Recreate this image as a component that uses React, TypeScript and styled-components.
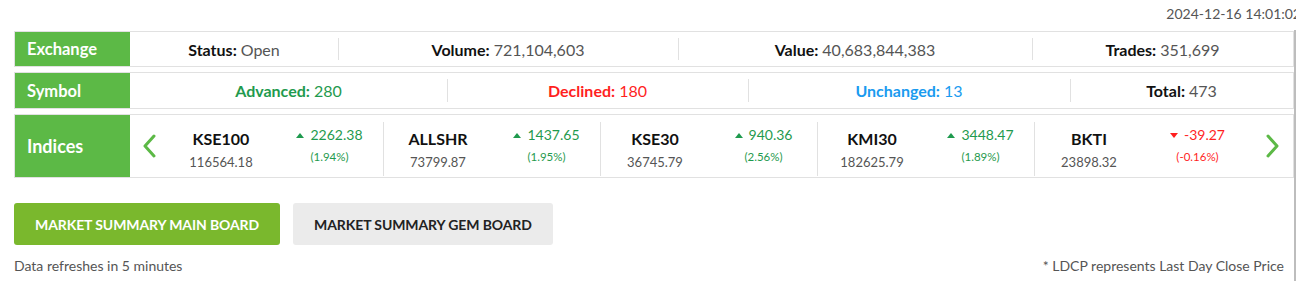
import styled, { createGlobalStyle } from "styled-components";

const labelGreen = "#5cb946";
const upGreen = "#1f9a4e";
const downRed = "#ff1f1f";
const lineGray = "#e1e1e1";

const GlobalStyle = createGlobalStyle`
  *, *::before, *::after {
    box-sizing: border-box;
  }
  html, body {
    margin: 0;
    padding: 0;
    background: #ffffff;
    overflow: hidden;
  }
  body {
    font-family: Lato, "Open Sans", "Liberation Sans", sans-serif;
    color: #222;
  }
`;

const Page = styled.div`
  width: 1310px;
  height: 281px;
  display: flex;
  flex-direction: column;
`;

const Header = styled.div`
  height: 30px;
  display: flex;
  justify-content: flex-end;
  align-items: flex-start;
  padding: 5px 9px 0 0;
  font-size: 14px;
  line-height: 17px;
  color: #555;
  white-space: nowrap;
`;

const Body = styled.div`
  flex: 1;
  display: flex;
`;

const Main = styled.div`
  width: 1294px;
  padding: 1px 0 0 14px;
  display: flex;
  flex-direction: column;
`;

const Side = styled.div`
  flex: 1;
  border-left: 2px solid #bdbdbd;
`;

const Rows = styled.div`
  display: flex;
  flex-direction: column;
  gap: 5px;
`;

const Row = styled.div<{ $cols: string; $h: number }>`
  display: grid;
  grid-template-columns: 115px ${(p) => p.$cols};
  height: ${(p) => p.$h}px;
  border: 1px solid ${lineGray};
`;

const Label = styled.div<{ $big?: boolean }>`
  background: ${labelGreen};
  color: #fff;
  font-weight: 700;
  font-size: ${(p) => (p.$big ? 18 : 16.5)}px;
  display: flex;
  align-items: center;
  padding-left: 12px;
`;

const Cell = styled.div<{ $divider?: boolean }>`
  display: flex;
  align-items: center;
  justify-content: center;
  font-size: 16px;
  position: relative;
  white-space: nowrap;
  &::before {
    content: "";
    display: ${(p) => (p.$divider ? "block" : "none")};
    position: absolute;
    left: 0;
    top: 6px;
    bottom: 6px;
    width: 1px;
    background: ${lineGray};
  }
`;

const Key = styled.span<{ $color?: string }>`
  font-weight: 700;
  color: ${(p) => p.$color ?? "#111"};
  margin-right: 4px;
`;

const Val = styled.span<{ $color?: string }>`
  color: ${(p) => p.$color ?? "#555"};
`;

const Arrow = styled.div`
  display: flex;
  align-items: center;
  justify-content: center;
  color: ${labelGreen};
`;

const Item = styled.div<{ $divider?: boolean }>`
  display: grid;
  grid-template-columns: 108px 109px;
  border-right: 1px solid ${(p) => (p.$divider ? lineGray : "transparent")};
  margin: 7px 0 1px;
`;

const NameCol = styled.div`
  display: flex;
  flex-direction: column;
  align-items: center;
  padding-top: 7px;
`;

const Name = styled.div`
  font-size: 16px;
  font-weight: 700;
  color: #111;
  line-height: 20px;
`;

const Price = styled.div`
  font-size: 13px;
  color: #555;
  line-height: 18px;
  margin-top: 4px;
`;

const ChangeCol = styled.div<{ $up: boolean }>`
  display: flex;
  flex-direction: column;
  align-items: center;
  padding-top: 4px;
  color: ${(p) => (p.$up ? upGreen : downRed)};
`;

const Change = styled.div`
  font-size: 14px;
  line-height: 18px;
  display: flex;
  align-items: center;
  gap: 6px;
`;

const Tri = styled.span<{ $up: boolean }>`
  width: 0;
  height: 0;
  border-left: 4px solid transparent;
  border-right: 4px solid transparent;
  ${(p) =>
    p.$up
      ? `border-bottom: 5px solid ${upGreen};`
      : `border-top: 5px solid ${downRed};`}
`;

const Pct = styled.div`
  font-size: 11.5px;
  line-height: 16px;
  margin-top: 5px;
`;

const Buttons = styled.div`
  display: flex;
  gap: 13px;
  margin-top: 25px;
`;

const Button = styled.button<{ $active?: boolean }>`
  height: 42px;
  padding: 0 21px;
  border: none;
  border-radius: 3px;
  font-family: inherit;
  font-size: 14px;
  font-weight: 700;
  letter-spacing: -0.1px;
  text-transform: uppercase;
  background: ${(p) => (p.$active ? "#7ab82d" : "#ebebeb")};
  color: ${(p) => (p.$active ? "#fff" : "#222")};
  cursor: pointer;
`;

const Footer = styled.div`
  display: flex;
  justify-content: space-between;
  margin-top: 12px;
  padding-right: 10px;
  font-size: 14px;
  color: #555;
  line-height: 17px;
`;

const Chevron = ({ dir }: { dir: "left" | "right" }) => (
  <svg width="14" height="24" viewBox="0 0 14 24">
    <path
      d={dir === "left" ? "M12 2 L3 12 L12 22" : "M2 2 L11 12 L2 22"}
      fill="none"
      stroke="currentColor"
      strokeWidth="3"
      strokeLinecap="round"
      strokeLinejoin="round"
    />
  </svg>
);

const indices = [
  { name: "KSE100", price: "116564.18", change: "2262.38", pct: "(1.94%)", up: true },
  { name: "ALLSHR", price: "73799.87", change: "1437.65", pct: "(1.95%)", up: true },
  { name: "KSE30", price: "36745.79", change: "940.36", pct: "(2.56%)", up: true },
  { name: "KMI30", price: "182625.79", change: "3448.47", pct: "(1.89%)", up: true },
  { name: "BKTI", price: "23898.32", change: "-39.27", pct: "(-0.16%)", up: false },
];

export default function App() {
  return (
    <Page>
      <GlobalStyle />
      <Header>2024-12-16 14:01:02</Header>
      <Body>
        <Main>
          <Rows>
            <Row $cols="208px 340px 354px 1fr" $h={36}>
              <Label>Exchange</Label>
              <Cell>
                <Key>Status:</Key>
                <Val>Open</Val>
              </Cell>
              <Cell $divider>
                <Key>Volume:</Key>
                <Val>721,104,603</Val>
              </Cell>
              <Cell $divider>
                <Key>Value:</Key>
                <Val>40,683,844,383</Val>
              </Cell>
              <Cell $divider>
                <Key>Trades:</Key>
                <Val>351,699</Val>
              </Cell>
            </Row>
            <Row $cols="317px 301px 322px 1fr" $h={37}>
              <Label>Symbol</Label>
              <Cell>
                <Key $color={upGreen}>Advanced:</Key>
                <Val $color={upGreen}>280</Val>
              </Cell>
              <Cell $divider>
                <Key $color={downRed}>Declined:</Key>
                <Val $color={downRed}>180</Val>
              </Cell>
              <Cell $divider>
                <Key $color="#1a9bef">Unchanged:</Key>
                <Val $color="#1a9bef">13</Val>
              </Cell>
              <Cell $divider>
                <Key>Total:</Key>
                <Val>473</Val>
              </Cell>
            </Row>
            <Row $cols="37px repeat(5, 217px) 1fr" $h={64}>
              <Label $big>Indices</Label>
              <Arrow>
                <Chevron dir="left" />
              </Arrow>
              {indices.map((ix, k) => (
                <Item key={ix.name} $divider={k < indices.length - 1}>
                  <NameCol>
                    <Name>{ix.name}</Name>
                    <Price>{ix.price}</Price>
                  </NameCol>
                  <ChangeCol $up={ix.up}>
                    <Change>
                      <Tri $up={ix.up} />
                      {ix.change}
                    </Change>
                    <Pct>{ix.pct}</Pct>
                  </ChangeCol>
                </Item>
              ))}
              <Arrow>
                <Chevron dir="right" />
              </Arrow>
            </Row>
          </Rows>
          <Buttons>
            <Button $active>Market Summary Main Board</Button>
            <Button>Market Summary GEM Board</Button>
          </Buttons>
          <Footer>
            <span>Data refreshes in 5 minutes</span>
            <span>* LDCP represents Last Day Close Price</span>
          </Footer>
        </Main>
        <Side />
      </Body>
    </Page>
  );
}
